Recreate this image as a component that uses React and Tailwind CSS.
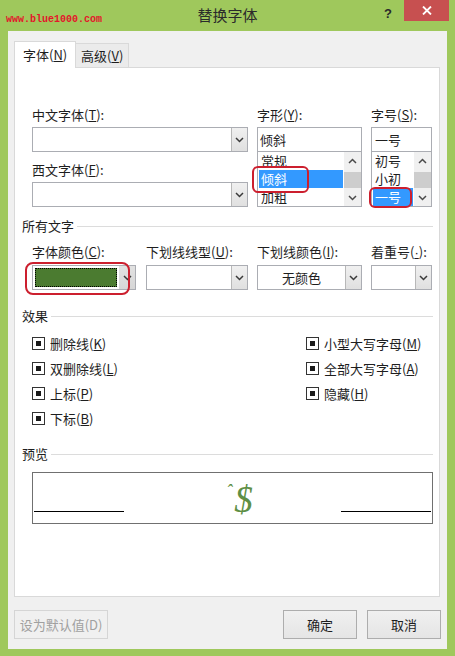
import React from "react";

const FONT = "font-['Noto_Sans_CJK_SC','Noto_Sans',sans-serif]";

function ChevronDown({ color = "#3a3a3a" }) {
  return (
    <svg width="9" height="6" viewBox="0 0 9 6">
      <polyline points="1,1 4.5,4.5 8,1" fill="none" stroke={color} strokeWidth="1.5" />
    </svg>
  );
}
function ChevronUp({ color = "#4a4a4a" }) {
  return (
    <svg width="9" height="6" viewBox="0 0 9 6">
      <polyline points="1,5 4.5,1.5 8,5" fill="none" stroke={color} strokeWidth="1.5" />
    </svg>
  );
}

function Label({ children }) {
  return <div className="h-[16px] leading-[16px] text-[13px] text-[#1e1e1e] whitespace-nowrap">{children}</div>;
}

function ArrowBtn() {
  return (
    <div className="w-[16px] h-full border-l border-[#b8b8b8] bg-gradient-to-b from-[#f0f0f0] to-[#e0e0e0] flex items-center justify-center">
      <ChevronDown />
    </div>
  );
}

function Combo({ w, children, center }) {
  return (
    <div className={`h-[25px] border border-[#abadb3] bg-white flex ${w}`}>
      <div className={`flex-1 flex items-center text-[13px] text-[#1e1e1e] ${center ? "justify-center" : "pl-[3px]"}`}>
        {children}
      </div>
      <ArrowBtn />
    </div>
  );
}

function ScrollBar() {
  return (
    <div className="w-[17px] h-full bg-[#f0f0f0] flex flex-col">
      <div className="h-[17px] flex items-center justify-center"><ChevronUp /></div>
      <div className="h-[20px] pt-[3px]"><div className="h-[16px] bg-[#cdcdcd]" /></div>
      <div className="h-[17px] flex items-center justify-center"><ChevronDown color="#4a4a4a" /></div>
    </div>
  );
}

function ListItem({ children, selected }) {
  return (
    <div
      className={`h-[18px] mx-[1px] pl-[2px] flex items-center text-[13px] leading-[18px] ${
        selected ? "bg-[#3399ff] text-white" : "text-[#1e1e1e]"
      }`}
    >
      {children}
    </div>
  );
}

function Header({ children }) {
  return (
    <div className="flex items-center">
      <div className="h-[16px] leading-[16px] text-[13px] text-[#1e1e1e]">{children}</div>
      <div className="flex-1 h-px bg-[#dcdcdc] ml-[3px]" />
    </div>
  );
}

function Check({ children }) {
  return (
    <div className="h-[25px] flex items-center">
      <div className="w-[13px] h-[13px] border border-[#333333] bg-white flex items-center justify-center">
        <div className="w-[5px] h-[5px] bg-[#1a1a1a]" />
      </div>
      <div className="ml-[5px] text-[13px] leading-[16px] text-[#1e1e1e]">{children}</div>
    </div>
  );
}

function Ring({ cls }) {
  return <div className={`absolute border-2 border-[#cc1f2e] rounded-[6px] pointer-events-none ${cls}`} />;
}

function Button({ children, w, disabled }) {
  return (
    <div
      className={`h-[29px] ${w} flex items-center justify-center text-[13px] border ${
        disabled
          ? "border-[#d5d5d5] bg-[#f0f0f0] text-[#a0a0a0]"
          : "border-[#adadad] bg-gradient-to-b from-[#f0f0f0] to-[#e5e5e5] text-[#1e1e1e]"
      }`}
    >
      {children}
    </div>
  );
}

export default function App() {
  return (
    <div className={`w-[455px] h-[656px] bg-[#9fc85c] flex flex-col ${FONT}`}>
      {/* Title bar */}
      <div className="h-[31px] grid grid-cols-[1fr_auto_1fr]">
        <div className="pl-[6px] pt-[3px]">
          <span className="font-['Liberation_Mono',monospace] font-bold text-[10px] leading-[12px] text-[#e3162b]">
            www.blue1000.com
          </span>
        </div>
        <div className="flex items-center text-[15px] text-[#2b2b2b] pb-[1px]">替换字体</div>
        <div className="flex justify-end items-start">
          <div className="mt-[4px] mr-[12px] text-[13px] font-bold text-[#2a2a2a] font-['Liberation_Sans',sans-serif]">?</div>
          <div className="w-[45px] h-[21px] bg-[#c75050] mr-[6px] flex items-center justify-center">
            <svg width="10" height="9" viewBox="0 0 10 9">
              <line x1="1" y1="0.5" x2="9" y2="8.5" stroke="#fff" strokeWidth="1.8" />
              <line x1="9" y1="0.5" x2="1" y2="8.5" stroke="#fff" strokeWidth="1.8" />
            </svg>
          </div>
        </div>
      </div>

      {/* Client area */}
      <div className="mx-[8px] h-[618px] bg-[#f0f0f0] flex flex-col">
        {/* Tabs */}
        <div className="pt-[10px] pl-[6px] flex items-end">
          <div className="relative z-10 -mb-px h-[27px] w-[62px] bg-white border-t border-x border-[#d9d9d9] pl-[8px] flex items-center text-[13px] text-[#1e1e1e]">
            字体(<u>N</u>)
          </div>
          <div className="h-[24px] w-[53px] bg-[#ebebeb] border-t border-r border-[#d9d9d9] pl-[5px] flex items-center text-[13px] text-[#1e1e1e]">
            高级(<u>V</u>)
          </div>
        </div>

        {/* Panel */}
        <div className="ml-[6px] mr-[7px] h-[530px] bg-white border border-[#d9d9d9] pt-[39px] pl-[7px] pr-[6px] flex flex-col">
          {/* Font section */}
          <div className="ml-[10px] flex">
            <div className="w-[216px] flex flex-col">
              <Label>中文字体(<u>T</u>):</Label>
              <div className="mt-[4px]"><Combo w="w-[216px]" /></div>
              <div className="mt-[10px]"><Label>西文字体(<u>F</u>):</Label></div>
              <div className="mt-[4px]"><Combo w="w-[216px]" /></div>
            </div>
            <div className="w-[105px] ml-[9px] flex flex-col">
              <Label>字形(<u>Y</u>):</Label>
              <div className="mt-[4px] h-[25px] border border-[#abadb3] pl-[2px] flex items-center text-[13px] text-[#1e1e1e]">倾斜</div>
              <div className="relative">
                <div className="h-[55px] border-x border-b border-[#abadb3] flex overflow-hidden">
                  <div className="flex-1 flex flex-col">
                    <ListItem>常规</ListItem>
                    <ListItem selected>倾斜</ListItem>
                    <ListItem>加粗</ListItem>
                  </div>
                  <ScrollBar />
                </div>
                <Ring cls="left-[-5px] top-[14px] w-[57px] h-[27px]" />
              </div>
            </div>
            <div className="w-[61px] ml-[9px] flex flex-col">
              <Label>字号(<u>S</u>):</Label>
              <div className="mt-[4px] h-[25px] border border-[#abadb3] pl-[3px] flex items-center text-[13px] text-[#1e1e1e]">一号</div>
              <div className="relative">
                <div className="h-[55px] border-x border-b border-[#abadb3] flex overflow-hidden">
                  <div className="flex-1 flex flex-col">
                    <ListItem>初号</ListItem>
                    <ListItem>小初</ListItem>
                    <ListItem selected>一号</ListItem>
                  </div>
                  <ScrollBar />
                </div>
                <Ring cls="left-[-2px] top-[35px] w-[43px] h-[21px]" />
              </div>
            </div>
          </div>

          {/* All text */}
          <div className="mt-[11px]"><Header>所有文字</Header></div>
          <div className="ml-[10px] mt-[10px] flex">
            <div className="w-[104px] flex flex-col">
              <Label>字体颜色(<u>C</u>):</Label>
              <div className="relative mt-[5px]">
                <div className="h-[25px] border border-[#abadb3] bg-white flex">
                  <div className="flex-1 p-[2px]">
                    <div className="h-full border border-dotted border-black bg-[#4b7b30]" />
                  </div>
                  <div className="w-[16px] h-full bg-gradient-to-b from-[#e2e2e2] to-[#d6d6d6] flex items-center justify-center">
                    <ChevronDown />
                  </div>
                </div>
                <Ring cls="left-[-7px] top-[-3px] w-[105px] h-[33px] rounded-[8px]" />
              </div>
            </div>
            <div className="w-[102px] ml-[10px] flex flex-col">
              <Label>下划线线型(<u>U</u>):</Label>
              <div className="mt-[5px]"><Combo w="w-[102px]" /></div>
            </div>
            <div className="w-[105px] ml-[9px] flex flex-col">
              <Label>下划线颜色(<u>I</u>):</Label>
              <div className="mt-[5px]"><Combo w="w-[105px]" center>无颜色</Combo></div>
            </div>
            <div className="w-[61px] ml-[9px] flex flex-col">
              <Label>
                着重号(<u className="font-['Liberation_Sans',sans-serif]">·</u>):
              </Label>
              <div className="mt-[5px]"><Combo w="w-[61px]" /></div>
            </div>
          </div>

          {/* Effects */}
          <div className="mt-[18px]"><Header>效果</Header></div>
          <div className="ml-[10px] mt-[7px] flex">
            <div className="w-[274px] flex flex-col">
              <Check>删除线(<u>K</u>)</Check>
              <Check>双删除线(<u>L</u>)</Check>
              <Check>上标(<u>P</u>)</Check>
              <Check>下标(<u>B</u>)</Check>
            </div>
            <div className="flex flex-col">
              <Check>小型大写字母(<u>M</u>)</Check>
              <Check>全部大写字母(<u>A</u>)</Check>
              <Check>隐藏(<u>H</u>)</Check>
            </div>
          </div>

          {/* Preview */}
          <div className="mt-[15px]"><Header>预览</Header></div>
          <div className="ml-[10px] mt-[10px] h-[52px] border border-[#707070] flex">
            <div className="w-[90px] ml-[1px] self-end mb-[11px] h-px bg-black" />
            <div className="flex-1 flex justify-center items-end pl-[14px] pb-[6px]">
              <span className="font-['Liberation_Serif',serif] italic text-[#5e8f45] leading-none flex items-start">
                <span className="text-[18px] leading-none mt-[0px] mr-[2px]">ˆ</span>
                <span className="text-[37px] leading-[35px] font-light">$</span>
              </span>
            </div>
            <div className="w-[90px] mr-[1px] self-end mb-[11px] h-px bg-black" />
          </div>
        </div>

        {/* Buttons */}
        <div className="mt-[13px] pl-[6px] pr-[6px] flex">
          <Button w="w-[94px]" disabled>设为默认值(D)</Button>
          <div className="ml-auto flex gap-[10px]">
            <Button w="w-[74px]">确定</Button>
            <Button w="w-[74px]">取消</Button>
          </div>
        </div>
      </div>
    </div>
  );
}
